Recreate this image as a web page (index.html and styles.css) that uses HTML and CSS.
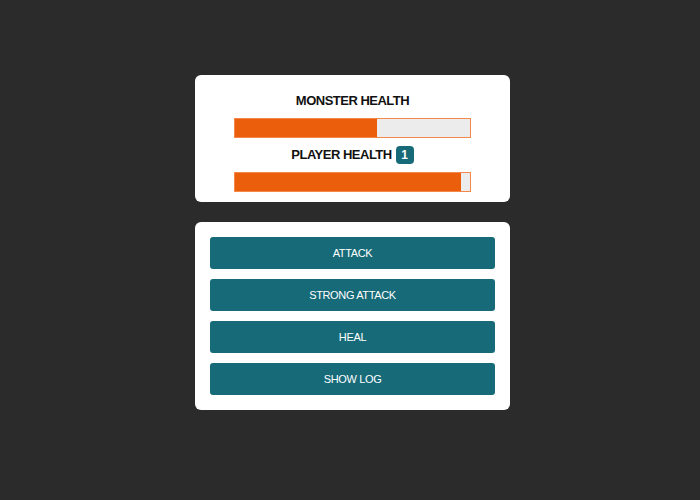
FILE: index.html
```html
<!DOCTYPE html>
<html>
<head>
<meta charset="utf-8">
<link rel="stylesheet" href="styles.css">
</head>
<body>
<main class="game">
  <section class="card health">
    <h2 class="label">MONSTER HEALTH</h2>
    <div class="bar"><div class="fill" style="width:60.5%"></div></div>
    <h2 class="label">PLAYER HEALTH <span class="badge">1</span></h2>
    <div class="bar"><div class="fill" style="width:96%"></div></div>
  </section>
  <section class="card controls">
    <button class="btn">ATTACK</button>
    <button class="btn">STRONG ATTACK</button>
    <button class="btn">HEAL</button>
    <button class="btn">SHOW LOG</button>
  </section>
</main>
</body>
</html>
```
FILE: styles.css
```css
html, body {
  margin: 0;
  padding: 0;
  background: #2b2b2b;
  font-family: "Liberation Sans", Arial, sans-serif;
}
body {
  padding-left: 5px;
}
.game {
  width: 315px;
  margin: 75px auto 0;
  display: flex;
  flex-direction: column;
  gap: 20px;
}
.card {
  background: #fff;
  border-radius: 6px;
}
.health {
  height: 127px;
  box-sizing: border-box;
  padding-top: 17px;
  display: flex;
  flex-direction: column;
  align-items: center;
}
.label {
  margin: 0;
  font-size: 13px;
  font-weight: bold;
  letter-spacing: -0.5px;
  color: #111;
  height: 18px;
  line-height: 18px;
  display: flex;
  align-items: center;
  gap: 4px;
}
.bar {
  width: 237px;
  height: 20px;
  box-sizing: border-box;
  border: 1px solid #f4884a;
  background: #ececec;
  margin: 8px 0;
}
.fill {
  height: 100%;
  background: #eb5e0b;
}
.badge {
  display: inline-flex;
  align-items: center;
  justify-content: center;
  width: 18px;
  height: 18px;
  border-radius: 4px;
  background: #176a78;
  color: #fff;
  font-size: 12px;
  font-weight: bold;
  letter-spacing: 0;
}
.controls {
  padding: 15px;
  display: flex;
  flex-direction: column;
  gap: 10px;
}
.btn {
  height: 32px;
  border: none;
  border-radius: 3px;
  background: #176a78;
  color: #fff;
  font-family: "Liberation Sans", Arial, sans-serif;
  font-size: 11px;
  letter-spacing: -0.35px;
  padding: 0;
}
```
